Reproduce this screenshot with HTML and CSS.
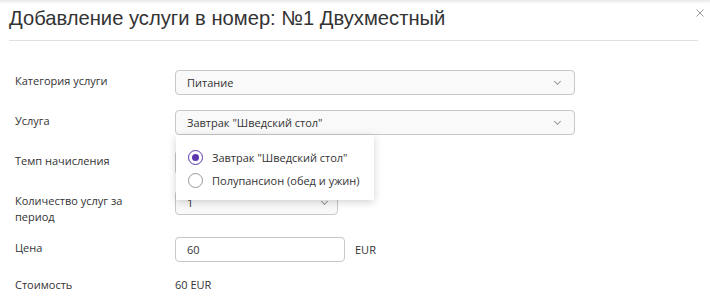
FILE: index.html
```html
<!DOCTYPE html>
<html lang="ru">
<head>
    <meta charset="UTF-8">
    <meta name="viewport" content="width=device-width, initial-scale=1.0">
    <link rel="stylesheet" href="styles.css">
    <title>Добавление услуги</title>
</head>
<body>
    <div class="modal">
        <div class="topShade"></div>
        <div class="modalHead">
            <h1>Добавление услуги в номер: №1 Двухместный</h1>
            <svg class="close" width="8" height="8" viewBox="0 0 8 8"><path d="M0.5 0.5L7.5 7.5M7.5 0.5L0.5 7.5" stroke="#999" stroke-width="1" fill="none"/></svg>
        </div>
        <form class="modalBody">
            <div class="row">
                <label>Категория услуги</label>
                <div class="select wide">Питание<span class="chev"></span></div>
            </div>
            <div class="row">
                <label>Услуга</label>
                <div class="holder">
                    <div class="select wide">Завтрак "Шведский стол"<span class="chev"></span></div>
                    <div class="dropdown">
                        <div class="opt"><span class="radio on"></span>Завтрак "Шведский стол"</div>
                        <div class="opt"><span class="radio"></span>Полупансион (обед и ужин)</div>
                    </div>
                </div>
            </div>
            <div class="row">
                <label>Темп начисления</label>
                <div class="select short"><span class="chev"></span></div>
            </div>
            <div class="row tall">
                <label>Количество услуг за<br>период</label>
                <div class="select short">1<span class="chev"></span></div>
            </div>
            <div class="row">
                <label>Цена</label>
                <div class="input">60</div>
                <span class="unit">EUR</span>
            </div>
            <div class="row last">
                <label>Стоимость</label>
                <span class="total">60 EUR</span>
            </div>
        </form>
    </div>
</body>
</html>
```

FILE: styles.css
```css
body{margin:0;background:#fff;font-family:"Open Sans","Noto Sans",sans-serif;font-size:11px;color:#333}
.modal{width:710px;height:300px;overflow:hidden}
.topShade{height:4px;background:linear-gradient(#e9e9e9,#fff)}
.modalHead{display:flex;justify-content:space-between;margin:0 12px 0 9px;height:36px;border-bottom:1px solid #e0e0e0}
.modalHead h1{margin:3px 0 0 0;font-family:"Liberation Sans Narrow","Liberation Sans",sans-serif;font-size:20.2px;font-weight:normal;color:#333}
.close{margin:5px -6px 0 0}
.modalBody{padding:29px 0 0 15px}
.row{display:flex;align-items:flex-start;margin-bottom:15px}
.row.tall{margin-bottom:12px}
.row label{width:160px;flex:none;padding-top:3px;line-height:16px}
.row.last label{padding-top:0}
.holder{position:relative}
.select{position:relative;box-sizing:border-box;height:25px;line-height:23px;padding:0 11px;border:1px solid #c8c8c8;border-radius:4px;background:#f9f9f9}
.select.wide{width:400px}
.select.short{width:163px}
.chev{position:absolute;right:14px;top:8px;width:4px;height:4px;border-right:1px solid #999;border-bottom:1px solid #999;transform:rotate(45deg)}
.select.short .chev{right:10px}
.input{box-sizing:border-box;width:170px;height:25px;line-height:23px;padding:0 11px;border:1px solid #c8c8c8;border-radius:4px;background:#fff}
.unit{margin-left:10px;line-height:25px}
.total{line-height:16px}
.dropdown{position:absolute;left:1px;top:25px;width:198px;height:65px;box-sizing:border-box;padding:11px 0 0 12px;background:#fff;box-shadow:0 2px 8px rgba(0,0,0,.18);z-index:2}
.opt{display:flex;align-items:center;height:23px;color:#333}
.radio{box-sizing:border-box;width:15px;height:15px;border:1px solid #999;border-radius:50%;margin-right:9px;position:relative}
.radio.on{border:1.5px solid #5b36ad}
.radio.on::after{content:"";position:absolute;left:2.5px;top:2.5px;width:7px;height:7px;border-radius:50%;background:#5b36ad}
```
